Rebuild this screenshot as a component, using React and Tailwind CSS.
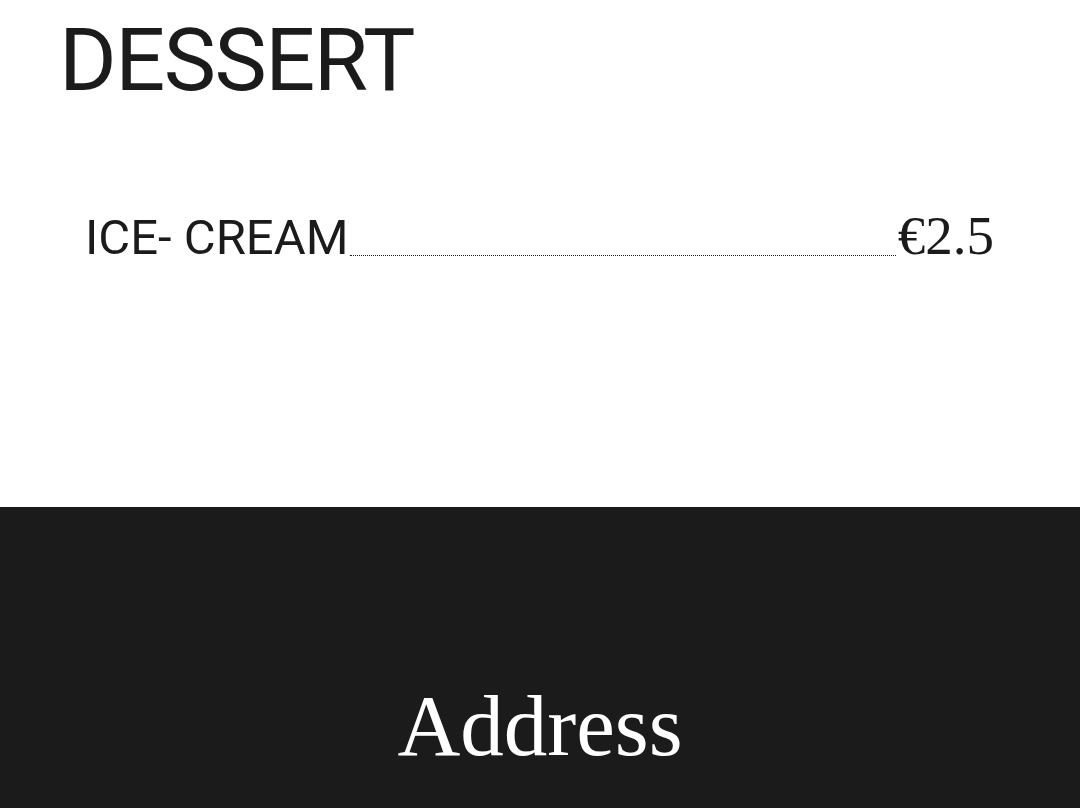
import React from "react";

const items = [{ name: "ICE- CREAM", price: "€2.5" }];

const App = () => {
  return (
    <div className="w-full min-h-[808px] bg-white">
      <section className="h-[507px] bg-white pt-4 pl-[59px] pr-[86px]">
        <h1 className="font-['Roboto',sans-serif] text-[88px] leading-none tracking-[-1.5px] text-[#1b1b1b]">
          DESSERT
        </h1>
        <div className="mt-[104px] pl-[26px] flex flex-col gap-4">
          {items.map((item) => (
            <div key={item.name} className="flex items-end text-[#1b1b1b]">
              <span className="font-['Roboto',sans-serif] text-[49px] leading-none mb-[1px]">
                {item.name}
              </span>
              <span className="flex-1 border-b border-dotted border-[#1b1b1b] mb-[7px] mx-[2px]" />
              <span className="font-['Liberation_Serif','Times_New_Roman',serif] text-[55px] leading-none">
                {item.price}
              </span>
            </div>
          ))}
        </div>
      </section>
      <section className="min-h-[301px] bg-[#1b1b1b] pt-[175px] flex justify-center">
        <h2 className="font-['Liberation_Serif','Times_New_Roman',serif] text-[87px] leading-none text-white">
          Address
        </h2>
      </section>
    </div>
  );
};

export default App;
